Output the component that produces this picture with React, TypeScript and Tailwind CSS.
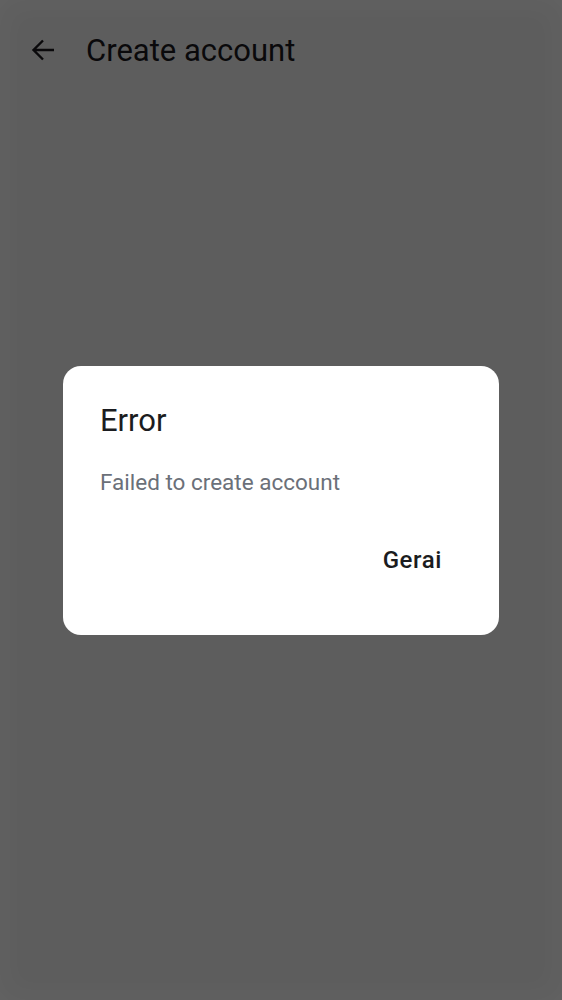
export default function App() {
  return (
    <div className="relative h-[1000px] w-full overflow-hidden bg-white font-['Roboto',sans-serif]">
      <header className="flex h-[100px] items-center pl-[30px]">
        <svg width="26" height="26" viewBox="0 0 26 26" fill="none" aria-label="Back">
          <path d="M24 13H4M13 3.5L3.5 13L13 22.5" stroke="#1c1b1f" strokeWidth="2.4" />
        </svg>
        <h1 className="ml-[30px] text-[31px] leading-none text-[#1c1b1f]">Create account</h1>
      </header>

      {/* scrim + dialog */}
      <div className="fixed inset-0 flex items-center justify-center bg-black/[0.635] shadow-[inset_0_0_30px_rgba(255,255,255,0.03)]">
        <div className="flex w-[436px] flex-col rounded-[18px] bg-white pb-[61px] pl-[37px] pr-[57px] pt-[37px]">
          <h2 className="text-[31px] leading-[36px] text-[#1b1c20]">Error</h2>
          <p className="mt-[29px] text-[22.5px] leading-[28px] text-[#6b7079]">Failed to create account</p>
          <div className="mt-[50px] flex justify-end">
            <button className="text-[24px] font-medium leading-[28px] tracking-[0.6px] text-[#1b1c20]">Gerai</button>
          </div>
        </div>
      </div>
    </div>
  );
}
